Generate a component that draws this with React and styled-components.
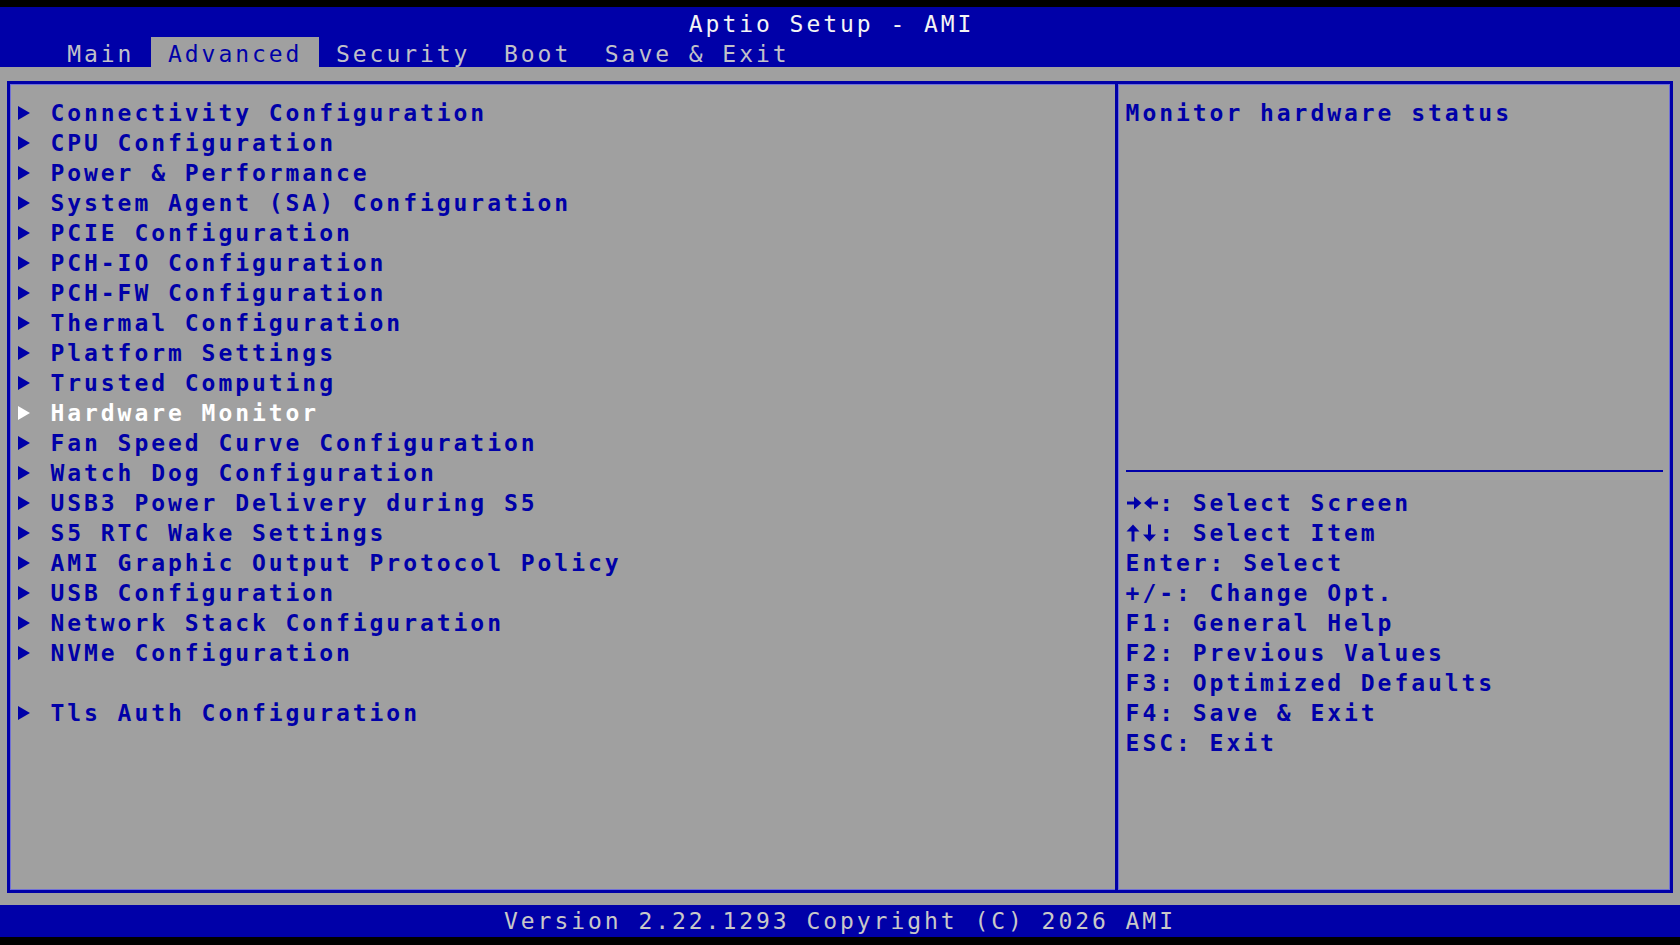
import React from "react";
import styled, { createGlobalStyle } from "styled-components";

// one text cell of the setup screen
const COL = 16.8;
const ROW = 30;
const SIZE = 23;

const BLUE = "#0000a8";
const GREY = "#a0a0a0";
const EDGE = "#7070d8";

const GlobalStyle = createGlobalStyle`
  html, body {
    margin: 0;
    padding: 0;
    background: #000;
  }
`;

const Screen = styled.div`
  width: 1680px;
  height: 945px;
  background: #000;
  display: flex;
  flex-direction: column;
  font-family: "DejaVu Sans Mono", "Liberation Mono", monospace;
  font-size: ${SIZE}px;
  letter-spacing: ${COL - SIZE * 0.6021}px;
  line-height: ${ROW}px;
  white-space: pre;
  overflow: hidden;
`;

const Header = styled.header`
  margin-top: 7px;
  height: 60px;
  padding-top: 1.5px;
  box-sizing: border-box;
  background: ${BLUE};
  display: flex;
  flex-direction: column;
`;

const Title = styled.div`
  height: ${ROW}px;
  padding-left: ${COL * 41}px;
  color: #f4f4f4;
`;

const TabBar = styled.nav`
  height: 28.5px;
  display: flex;
  padding-left: ${COL * 3}px;
`;

const Tab = styled.div`
  padding: 0 ${COL}px;
  margin-top: -1.5px;
  padding-top: 1.5px;
  color: ${(p) => (p.$active ? BLUE : "#c0c0c8")};
  background: ${(p) => (p.$active ? GREY : "transparent")};
`;

const Body = styled.main`
  height: 838px;
  box-sizing: border-box;
  background: ${GREY};
  padding: 14px 7px 12px;
  display: flex;
  font-weight: bold;
`;

const Frame = styled.div`
  flex: 1;
  display: flex;
  border: 3px solid ${BLUE};
  box-shadow: inset 0 0 0 1px ${EDGE};
`;

const MenuPane = styled.section`
  flex: 1;
  padding-top: 13.5px;
  padding-left: 6.8px;
  display: flex;
  flex-direction: column;
`;

const MenuItem = styled.div`
  height: ${ROW}px;
  display: flex;
  align-items: center;
  color: ${(p) => (p.$selected ? "#ffffff" : BLUE)};
`;

const Gap = styled.div`
  height: ${ROW}px;
`;

const ArrowCell = styled.span`
  width: ${COL * 2}px;
  display: flex;
  align-items: center;
`;

const HelpPane = styled.aside`
  flex: 0 0 555px;
  box-sizing: border-box;
  border-left: 3px solid ${BLUE};
  box-shadow: inset 1px 0 0 ${EDGE};
  padding: 13.5px 6.8px 0 7.6px;
  display: flex;
  flex-direction: column;
  color: ${BLUE};
`;

const HelpText = styled.div`
  height: ${ROW * 12}px;
`;

const Separator = styled.div`
  height: ${ROW}px;
  display: flex;
  align-items: center;
  &::after {
    content: "";
    width: ${COL * 32}px;
    height: 2px;
    margin-top: -4px;
    background: ${BLUE};
  }
`;

const KeyLine = styled.div`
  height: ${ROW}px;
  display: flex;
  align-items: center;
`;

const KeyIcon = styled.svg`
  width: ${COL * 2}px;
  height: 18px;
  flex: none;
`;

const Footer = styled.footer`
  height: 32px;
  background: ${BLUE};
  color: #c8c8c8;
  text-align: center;
  line-height: 32px;
`;

const Pointer = ({ color }) => (
  <svg width="14" height="16" viewBox="0 0 14 16">
    <polygon points="1,1 13,8 1,15" fill={color} />
  </svg>
);

const LeftRight = () => (
  <KeyIcon viewBox="0 0 33.6 18">
    <rect x="1" y="7.5" width="9" height="3" fill={BLUE} />
    <polygon points="8,2.5 15.5,9 8,15.5" fill={BLUE} />
    <rect x="23" y="7.5" width="9" height="3" fill={BLUE} />
    <polygon points="25.5,2.5 18,9 25.5,15.5" fill={BLUE} />
  </KeyIcon>
);

const UpDown = () => (
  <KeyIcon viewBox="0 0 33.6 18">
    <rect x="5.5" y="6" width="3" height="11.5" fill={BLUE} />
    <polygon points="0.5,7.5 7,0.5 13.5,7.5" fill={BLUE} />
    <rect x="22" y="0.5" width="3" height="11.5" fill={BLUE} />
    <polygon points="17,10.5 23.5,17.5 30,10.5" fill={BLUE} />
  </KeyIcon>
);

const tabs = ["Main", "Advanced", "Security", "Boot", "Save & Exit"];

const items = [
  "Connectivity Configuration",
  "CPU Configuration",
  "Power & Performance",
  "System Agent (SA) Configuration",
  "PCIE Configuration",
  "PCH-IO Configuration",
  "PCH-FW Configuration",
  "Thermal Configuration",
  "Platform Settings",
  "Trusted Computing",
  "Hardware Monitor",
  "Fan Speed Curve Configuration",
  "Watch Dog Configuration",
  "USB3 Power Delivery during S5",
  "S5 RTC Wake Settings",
  "AMI Graphic Output Protocol Policy",
  "USB Configuration",
  "Network Stack Configuration",
  "NVMe Configuration",
  null,
  "Tls Auth Configuration",
];

const keys = [
  [LeftRight, ": Select Screen"],
  [UpDown, ": Select Item"],
  [null, "Enter: Select"],
  [null, "+/-: Change Opt."],
  [null, "F1: General Help"],
  [null, "F2: Previous Values"],
  [null, "F3: Optimized Defaults"],
  [null, "F4: Save & Exit"],
  [null, "ESC: Exit"],
];

const App = () => {
  const selected = "Hardware Monitor";

  return (
    <Screen>
      <GlobalStyle />
      <Header>
        <Title>Aptio Setup - AMI</Title>
        <TabBar>
          {tabs.map((t) => (
            <Tab key={t} $active={t === "Advanced"}>
              {t}
            </Tab>
          ))}
        </TabBar>
      </Header>
      <Body>
        <Frame>
          <MenuPane>
            {items.map((item, index) =>
              item ? (
                <MenuItem key={index} $selected={item === selected}>
                  <ArrowCell>
                    <Pointer color={item === selected ? "#ffffff" : BLUE} />
                  </ArrowCell>
                  {item}
                </MenuItem>
              ) : (
                <Gap key={index} />
              )
            )}
          </MenuPane>
          <HelpPane>
            <HelpText>Monitor hardware status</HelpText>
            <Separator />
            {keys.map(([Icon, text]) => (
              <KeyLine key={text}>
                {Icon && <Icon />}
                {text}
              </KeyLine>
            ))}
          </HelpPane>
        </Frame>
      </Body>
      <Footer>Version 2.22.1293 Copyright (C) 2026 AMI</Footer>
    </Screen>
  );
};

export default App;
